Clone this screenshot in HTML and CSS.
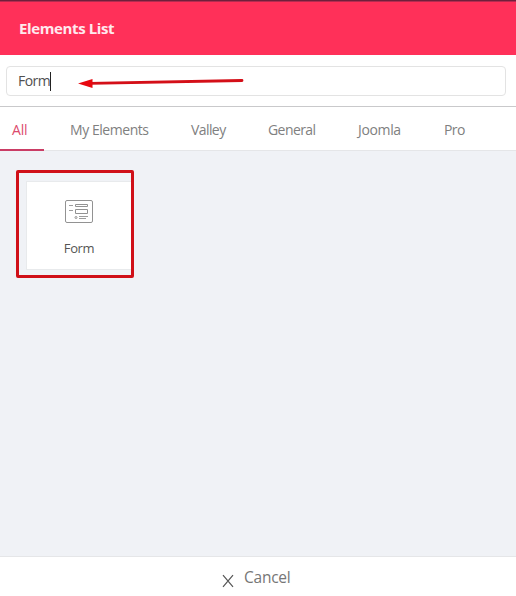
FILE: index.html
```html
<!DOCTYPE html>
<html lang="en">
<head>
<meta charset="utf-8">
<title>Elements List</title>
<link rel="stylesheet" href="styles.css">
</head>
<body>
<div class="panel">
  <header class="header"><h1 class="title">Elements List</h1></header>
  <div class="search">
    <div class="field"><span class="query">Form</span><span class="caret"></span></div>
    <svg class="arrow" width="168" height="14" viewBox="0 0 168 14">
      <path d="M165 4.5 13 7.3" fill="none" stroke="#d40f18" stroke-width="2.8" stroke-linecap="round"/>
      <path d="M1 7.5 15.5 3v9z" fill="#e80810"/>
    </svg>
  </div>
  <nav class="tabs">
    <a class="tab active">All</a>
    <a class="tab mine">My Elements</a>
    <a class="tab valley">Valley</a>
    <a class="tab general">General</a>
    <a class="tab joomla">Joomla</a>
    <a class="tab pro">Pro</a>
  </nav>
  <main class="content">
    <div class="highlight">
      <div class="card">
        <svg class="icon" width="28" height="24" viewBox="0 0 28 24" fill="none" stroke="#929292">
          <rect x=".5" y=".5" width="27" height="22" rx="1.5"/>
          <path d="M4 5.5h4M4 10.5h4M14 16.5h9M14 18.5h7" stroke-width=".9"/>
          <path d="M10.5 4.5h12v2h-12zM10.5 9.5h12v4h-12z"/>
          <circle cx="11" cy="17.5" r="1"/>
        </svg>
        <span class="label">Form</span>
      </div>
    </div>
  </main>
  <footer class="footer">
    <svg class="close" width="12" height="14" viewBox="0 0 12 14"><path d="M1 1.2 11 12.8M11 1.2 1 12.8" stroke="#555" stroke-width="1.2"/></svg>
    <span class="cancel">Cancel</span>
  </footer>
</div>
</body>
</html>
```
FILE: styles.css
```css
* { box-sizing: border-box; }
body { margin: 0; font-family: "Open Sans", "Noto Sans", sans-serif; background: #fff; }
.panel { width: 516px; height: 596px; display: flex; flex-direction: column; overflow: hidden; }
.header { height: 55px; background: #ff3059; border-top: 1px solid #701f3b; box-shadow: inset 0 1px #b52b50; padding: 17px 19px 0; }
.title { margin: 0; font-size: 15px; line-height: 20px; font-weight: 700; letter-spacing: -.38px; color: #ffe9ee; }
.search { position: relative; height: 52px; padding: 11px 10px 0 6px; border-bottom: 1px solid #c9c9cb; }
.field { height: 30px; border: 1px solid #e3e3e3; border-radius: 4px; display: flex; align-items: center; padding-left: 11px; }
.query { font-size: 14px; line-height: 20px; letter-spacing: -.55px; color: #505050; }
.caret { width: 1px; height: 19px; background: #222; }
.arrow { position: absolute; left: 77px; top: 21px; }
.tabs { height: 44px; display: flex; border-bottom: 1px solid #e5e6e8; padding-right: 30px; }
.tab { height: 44px; padding: 13px 0 0; margin-right: 42px; font-size: 14px; line-height: 20px; letter-spacing: -.58px; color: #808080; white-space: nowrap; }
.tab.active { width: 44px; padding-left: 12px; margin-right: 26px; letter-spacing: -.2px; color: #dc4a6d; border-bottom: 2px solid #ca3d65; }
.tab.mine { width: 79px; letter-spacing: -.45px; }
.valley { width: 35px; }
.general { width: 48px; }
.joomla { width: 44px; }
.tab.joomla { letter-spacing: -.35px; }
.tab.pro { margin-right: 0; }
.content { flex: 1; background: #f0f2f6; padding: 19px 16px; }
.highlight { width: 118px; height: 108px; border: 3px solid #d01018; border-radius: 2px; padding: 8px 0 0 7px; }
.card { height: 89px; background: #fff; border: 1px solid #e8eaec; border-right: 0; display: flex; flex-direction: column; align-items: center; padding-top: 18px; }
.label { margin-top: 15px; font-size: 13px; line-height: 18px; letter-spacing: -.4px; color: #555; }
.footer { height: 40px; border-top: 1px solid #e5e6e8; display: flex; align-items: flex-start; padding-left: 222px; }
.close { margin-top: 17px; }
.cancel { margin: 9px 0 0 10px; font-size: 15.5px; line-height: 22px; letter-spacing: -.25px; color: #767676; }
```
